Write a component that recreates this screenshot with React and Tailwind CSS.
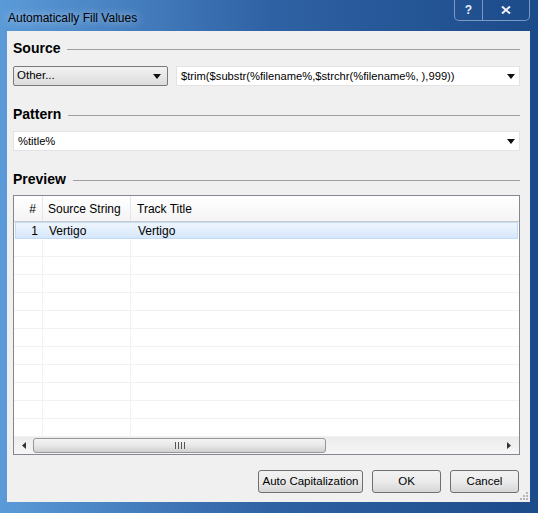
import React from 'react';

const font = { fontFamily: '"Liberation Sans", Arial, sans-serif' };

const Heading = ({ children }) => (
  <div className="flex items-center h-[18px]">
    <span className="text-[14px] font-bold text-black leading-none">{children}</span>
    <div className="flex-1 h-px bg-[#a0a0a0] ml-[7px] mt-[2px]" />
  </div>
);

const Arrow = () => (
  <svg width="8" height="5" viewBox="0 0 8 5" className="shrink-0">
    <path d="M0 0 L8 0 L4 5 Z" fill="#111" />
  </svg>
);

const Button = ({ children, w }) => (
  <button
    className={`h-[23px] ${w} rounded-[3px] border border-[#707070] bg-gradient-to-b from-[#f2f2f2] via-[#ebebeb] to-[#d6d6d6] text-[11.5px] text-black flex items-center justify-center`}
  >
    {children}
  </button>
);

const rows = Array.from({ length: 11 });

export default function App() {
  return (
    <div
      style={font}
      className="w-[538px] h-[513px] flex flex-col bg-gradient-to-r from-[#5b9ad8] via-[#2f62a4] to-[#1c4b8a] overflow-hidden"
    >
      {/* title bar */}
      <div className="h-[31px] flex items-start relative">
        <div className="pl-[8px] pt-[9px] text-[12px] text-black [text-shadow:0_0_8px_#cfe0f4]">
          Automatically Fill Values
        </div>
        <div className="ml-auto mr-[8px] flex h-[21px] border border-t-0 border-[#b9cbe4]/60 rounded-b-[5px] overflow-hidden">
          <div className="w-[28px] flex items-center justify-center text-[#e8eef6] font-bold text-[12px] border-r border-[#b9cbe4]/60">?</div>
          <div className="w-[46px] flex items-center justify-center">
            <svg width="10" height="8" viewBox="0 0 10 8">
              <path d="M1 0.5 L9 7.5 M9 0.5 L1 7.5" stroke="#eef2f8" strokeWidth="2" />
            </svg>
          </div>
        </div>
      </div>

      {/* client */}
      <div className="ml-[7px] mr-[8px] h-[471px] bg-[#f0f0f0] pl-[6px] pr-[10px] pt-[8px] flex flex-col relative">
        <Heading>Source</Heading>
        <div className="mt-[9px] h-[20px] flex gap-[8px]">
          <div className="w-[155px] h-full border border-[#7a7a7a] rounded-[2px] bg-gradient-to-b from-[#f2f2f2] to-[#dcdcdc] flex items-center pl-[3px] pr-[6px]">
            <span className="text-[11.5px] text-black flex-1">Other...</span>
            <Arrow />
          </div>
          <div className="flex-1 h-full bg-white border border-[#e3e3e3] flex items-center pl-[4px] pr-[4px]">
            <span className="text-[11.2px] text-black flex-1 whitespace-nowrap">$trim($substr(%filename%,$strchr(%filename%, ),999))</span>
            <Arrow />
          </div>
        </div>

        <div className="mt-[19px]">
          <Heading>Pattern</Heading>
        </div>
        <div className="mt-[8px] h-[20px] bg-white border border-[#e3e3e3] flex items-center pl-[4px] pr-[4px]">
          <span className="text-[11.2px] text-black flex-1">%title%</span>
          <Arrow />
        </div>

        <div className="mt-[19px]">
          <Heading>Preview</Heading>
        </div>

        {/* table */}
        <div className="mt-[7px] h-[260px] border border-[#828790] bg-white flex flex-col text-[12px] text-black">
          <div className="h-[26px] flex bg-gradient-to-b from-white to-[#f4f4f5] border-b border-[#c9cbcf]">
            <div className="w-[29px] flex items-center justify-end pr-[6px] border-r border-[#e4e6e9]">#</div>
            <div className="w-[88px] flex items-center pl-[5px] border-r border-[#e4e6e9]">Source String</div>
            <div className="flex-1 flex items-center pl-[6px]">Track Title</div>
          </div>
          <div className="h-[17px] flex bg-gradient-to-b from-[#eef5fd] to-[#d6e7fb] border border-[#c2daf5] mx-px">
            <div className="w-[28px] flex items-center justify-end pr-[6px]">1</div>
            <div className="w-[88px] flex items-center pl-[5px]">Vertigo</div>
            <div className="flex-1 flex items-center pl-[6px]">Vertigo</div>
          </div>
          <div className="flex-1 flex flex-col overflow-hidden">
            {rows.map((_, i) => (
              <div key={i} className="h-[18px] shrink-0 flex border-b border-[#f1f1f1]">
                <div className="w-[29px] border-r border-[#f1f1f1]" />
                <div className="w-[88px] border-r border-[#f1f1f1]" />
                <div className="flex-1" />
              </div>
            ))}
          </div>
          {/* scrollbar */}
          <div className="h-[17px] flex items-center bg-gradient-to-b from-[#ececec] to-[#f6f6f6] px-[1px]">
            <div className="w-[18px] flex items-center justify-center">
              <svg width="4" height="7" viewBox="0 0 4 7"><path d="M4 0 L0 3.5 L4 7 Z" fill="#333" /></svg>
            </div>
            <div className="w-[293px] h-[15px] rounded-[3px] border border-[#979797] bg-gradient-to-b from-[#f4f4f4] via-[#e8e8e8] to-[#d0d0d0] flex items-center justify-center">
              <div className="flex gap-[2px]">
                <div className="w-px h-[7px] bg-[#555]" />
                <div className="w-px h-[7px] bg-[#555]" />
                <div className="w-px h-[7px] bg-[#555]" />
                <div className="w-px h-[7px] bg-[#555]" />
              </div>
            </div>
            <div className="flex-1" />
            <div className="w-[18px] flex items-center justify-center">
              <svg width="4" height="7" viewBox="0 0 4 7"><path d="M0 0 L4 3.5 L0 7 Z" fill="#333" /></svg>
            </div>
          </div>
        </div>

        {/* buttons */}
        <div className="mt-[15px] flex justify-end gap-[9px] pr-px">
          <Button w="w-[105px]">Auto Capitalization</Button>
          <Button w="w-[69px]">OK</Button>
          <Button w="w-[69px]">Cancel</Button>
        </div>

        <div className="absolute right-[2px] bottom-[2px] grid grid-cols-3 gap-px">
          <div />
          <div />
          <div className="w-[2px] h-[2px] bg-[#b8b8b8]" />
          <div />
          <div className="w-[2px] h-[2px] bg-[#b8b8b8]" />
          <div className="w-[2px] h-[2px] bg-[#b8b8b8]" />
          <div className="w-[2px] h-[2px] bg-[#b8b8b8]" />
          <div className="w-[2px] h-[2px] bg-[#b8b8b8]" />
          <div className="w-[2px] h-[2px] bg-[#b8b8b8]" />
        </div>
      </div>
    </div>
  );
}
